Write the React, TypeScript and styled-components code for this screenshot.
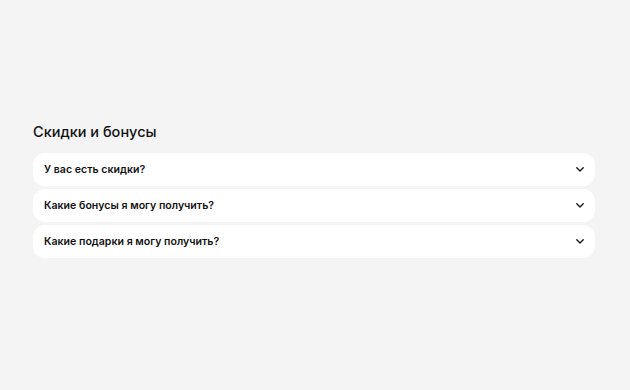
import React from 'react';
import styled, { createGlobalStyle } from 'styled-components';

const GlobalStyle = createGlobalStyle`
  html, body {
    margin: 0;
    padding: 0;
    background: #f4f4f4;
  }
  body {
    font-family: 'Inter', 'Noto Sans', sans-serif;
    color: #111;
  }
`;

const Page = styled.div`
  min-height: 390px;
  box-sizing: border-box;
  padding: 121px 35px 0 33px;
`;

const Title = styled.h2`
  margin: 0 0 10px;
  font-size: 14.5px;
  font-weight: 500;
  line-height: 22px;
  color: #111;
`;

const List = styled.div`
  display: flex;
  flex-direction: column;
  gap: 3px;
`;

const Item = styled.button`
  display: flex;
  align-items: center;
  justify-content: space-between;
  width: 100%;
  height: 33px;
  padding: 0 11px 0 11px;
  border: none;
  border-radius: 12px;
  background: #fff;
  font-family: inherit;
  font-size: 10.6px;
  font-weight: 600;
  color: #111;
  text-align: left;
  cursor: pointer;
`;

const Chevron = () => (
  <svg width="8" height="5" viewBox="0 0 8 5" fill="none">
    <path
      d="M0.8 0.8L4 4L7.2 0.8"
      stroke="#111"
      strokeWidth="1.3"
      strokeLinecap="round"
      strokeLinejoin="round"
    />
  </svg>
);

const questions = [
  'У вас есть скидки?',
  'Какие бонусы я могу получить?',
  'Какие подарки я могу получить?',
];

const App = () => (
  <>
    <GlobalStyle />
    <Page>
      <Title>Скидки и бонусы</Title>
      <List>
        {questions.map((q) => (
          <Item key={q}>
            <span>{q}</span>
            <Chevron />
          </Item>
        ))}
      </List>
    </Page>
  </>
);

export default App;
